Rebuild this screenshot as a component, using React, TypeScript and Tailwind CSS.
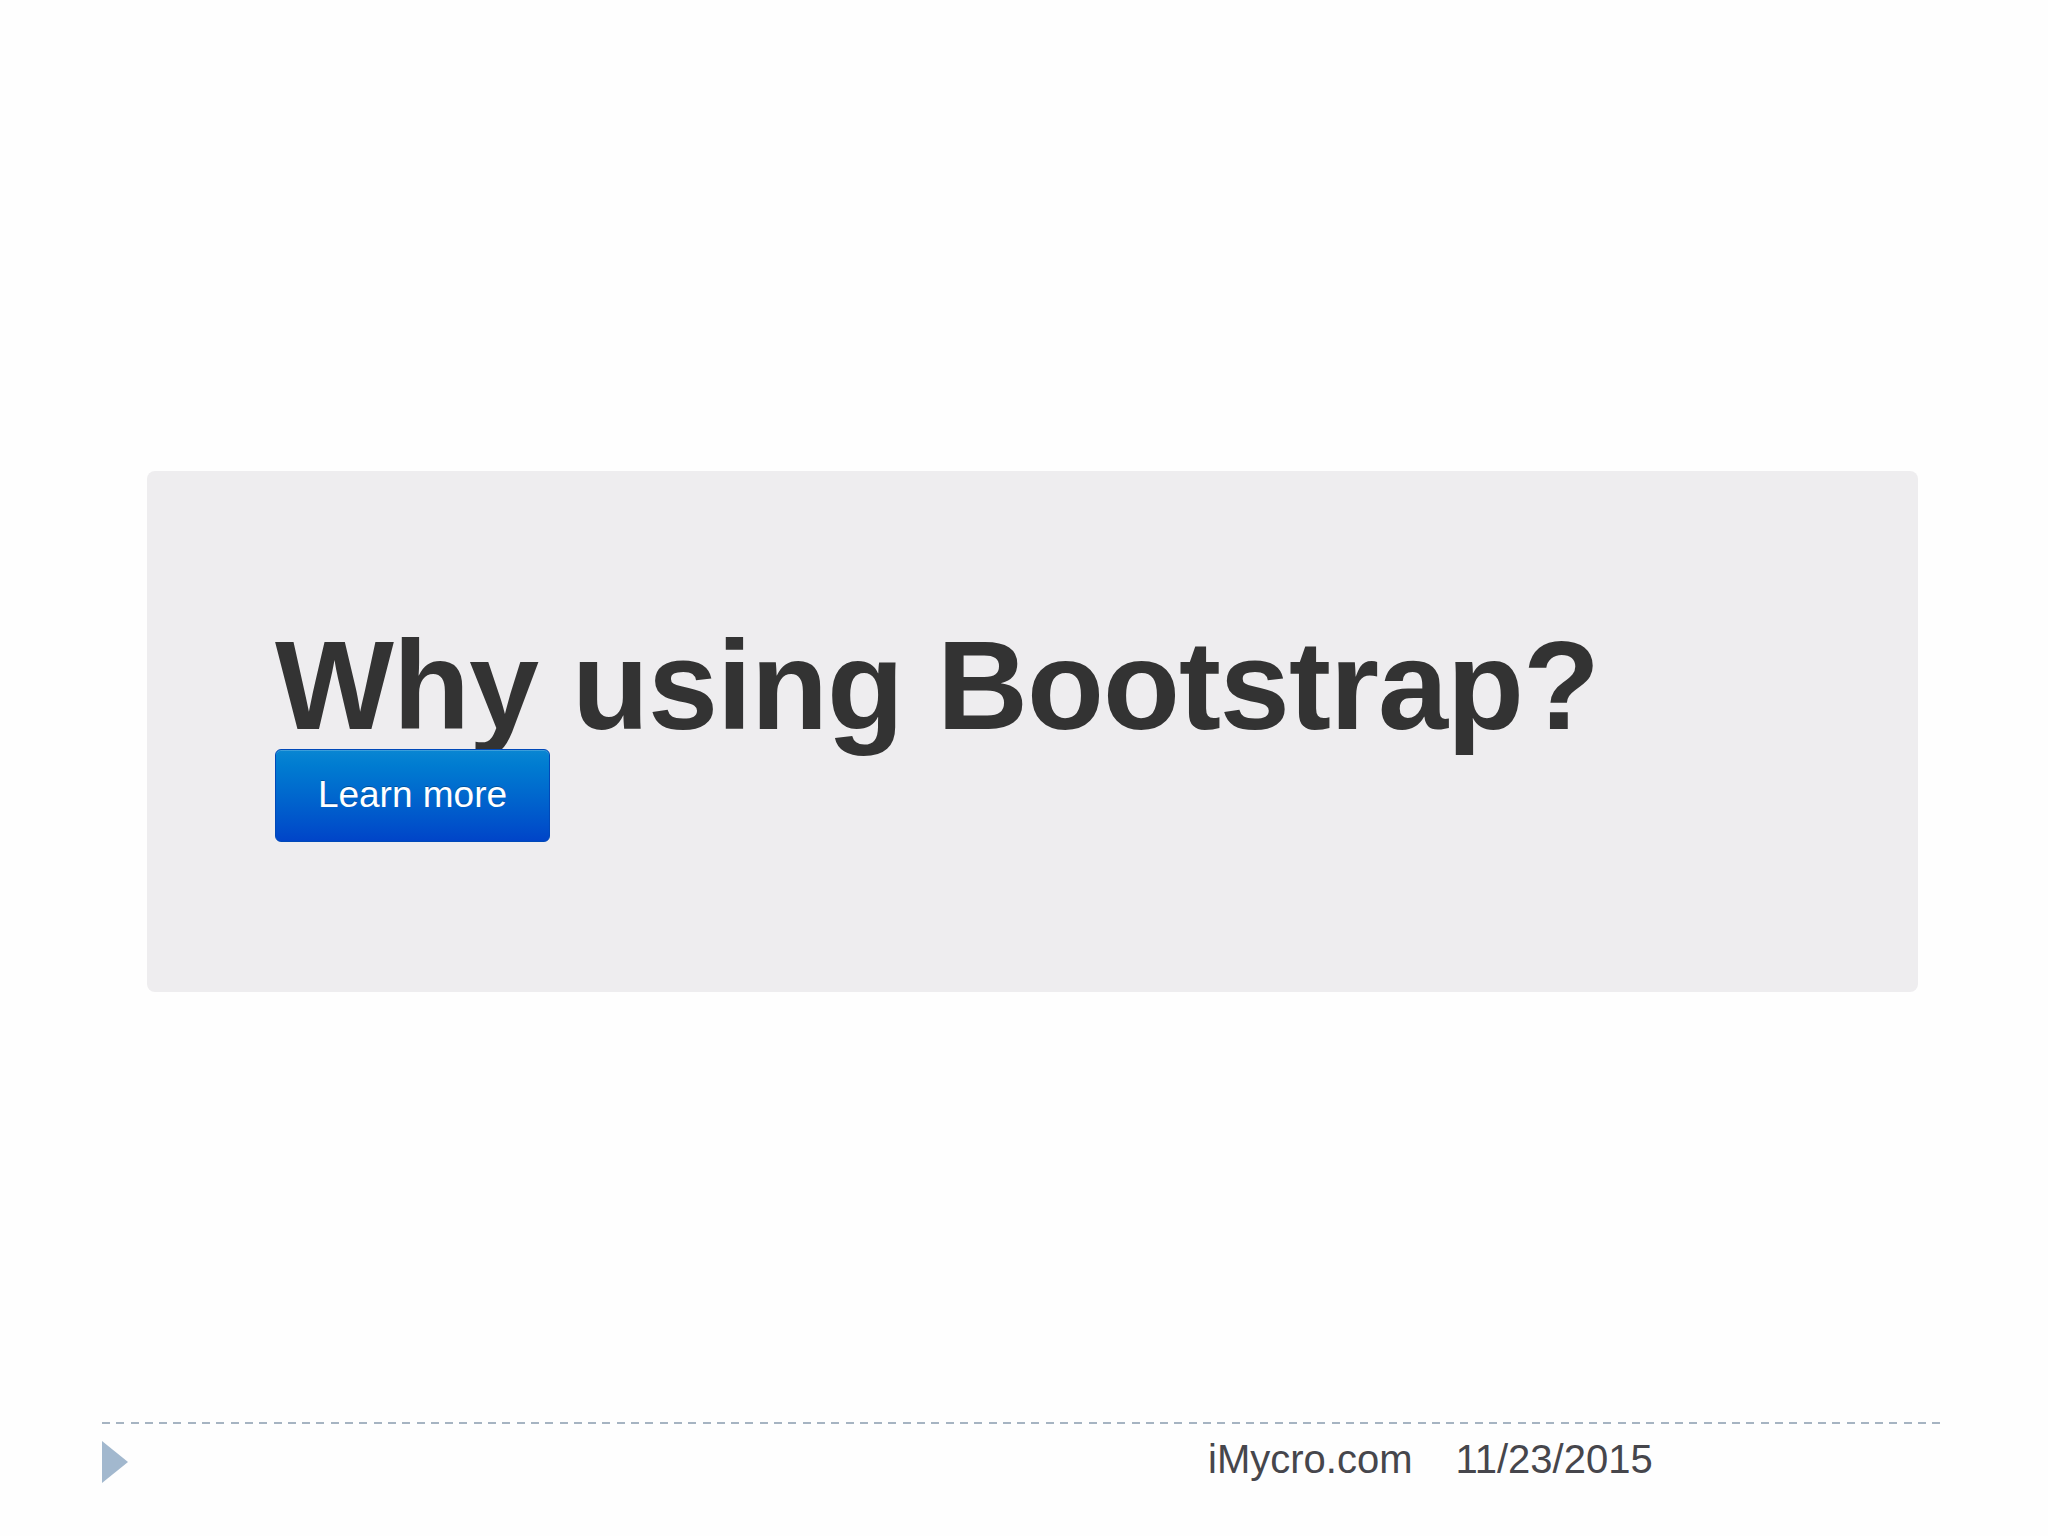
import React from "react";

export default function App() {
  return (
    <div className="w-[2048px] h-[1536px] bg-[#fefefe] flex flex-col overflow-hidden" style={{ fontFamily: '"Liberation Sans", Arial, sans-serif' }}>
      <div className="mt-[471px] ml-[147px] w-[1771px] h-[521px] rounded-[8px] bg-[#eeedef] pt-[152px] pl-[128px] flex flex-col items-start">
        <h1 className="text-[126px] leading-none font-bold text-[#333333] tracking-[-1px] whitespace-nowrap" style={{ fontFamily: '"Liberation Sans", Arial, sans-serif' }}>
          Why using Bootstrap?
        </h1>
        <button className="w-[275px] h-[93px] rounded-[6px] border border-[#0049b8] bg-gradient-to-b from-[#0a86d2] to-[#0044c8] text-white text-[37px] leading-none flex items-center justify-center pb-[2px] shadow-[inset_0_1px_0_rgba(255,255,255,0.2)] [text-shadow:0_-1px_0_rgba(0,0,0,0.25)]" style={{ fontFamily: '"Liberation Sans", Arial, sans-serif' }}>
          Learn more
        </button>
      </div>
      <div className="mt-[430px] ml-[102px] w-[1845px] h-[2px] bg-[repeating-linear-gradient(90deg,#a6b4c2_0_8px,transparent_8px_14.3px)]" />
      <div className="flex items-start ml-[102px]">
        <svg width="26" height="42" viewBox="0 0 26 42" className="mt-[17px] shrink-0">
          <polygon points="0,0 26,21 0,42" fill="#a2b8ce" />
        </svg>
        <div className="ml-[1080px] mt-[15px] flex text-[40px] leading-none text-[#46464c] whitespace-nowrap">
          <span>iMycro.com</span>
          <span className="ml-[43px]">11/23/2015</span>
        </div>
      </div>
    </div>
  );
}
